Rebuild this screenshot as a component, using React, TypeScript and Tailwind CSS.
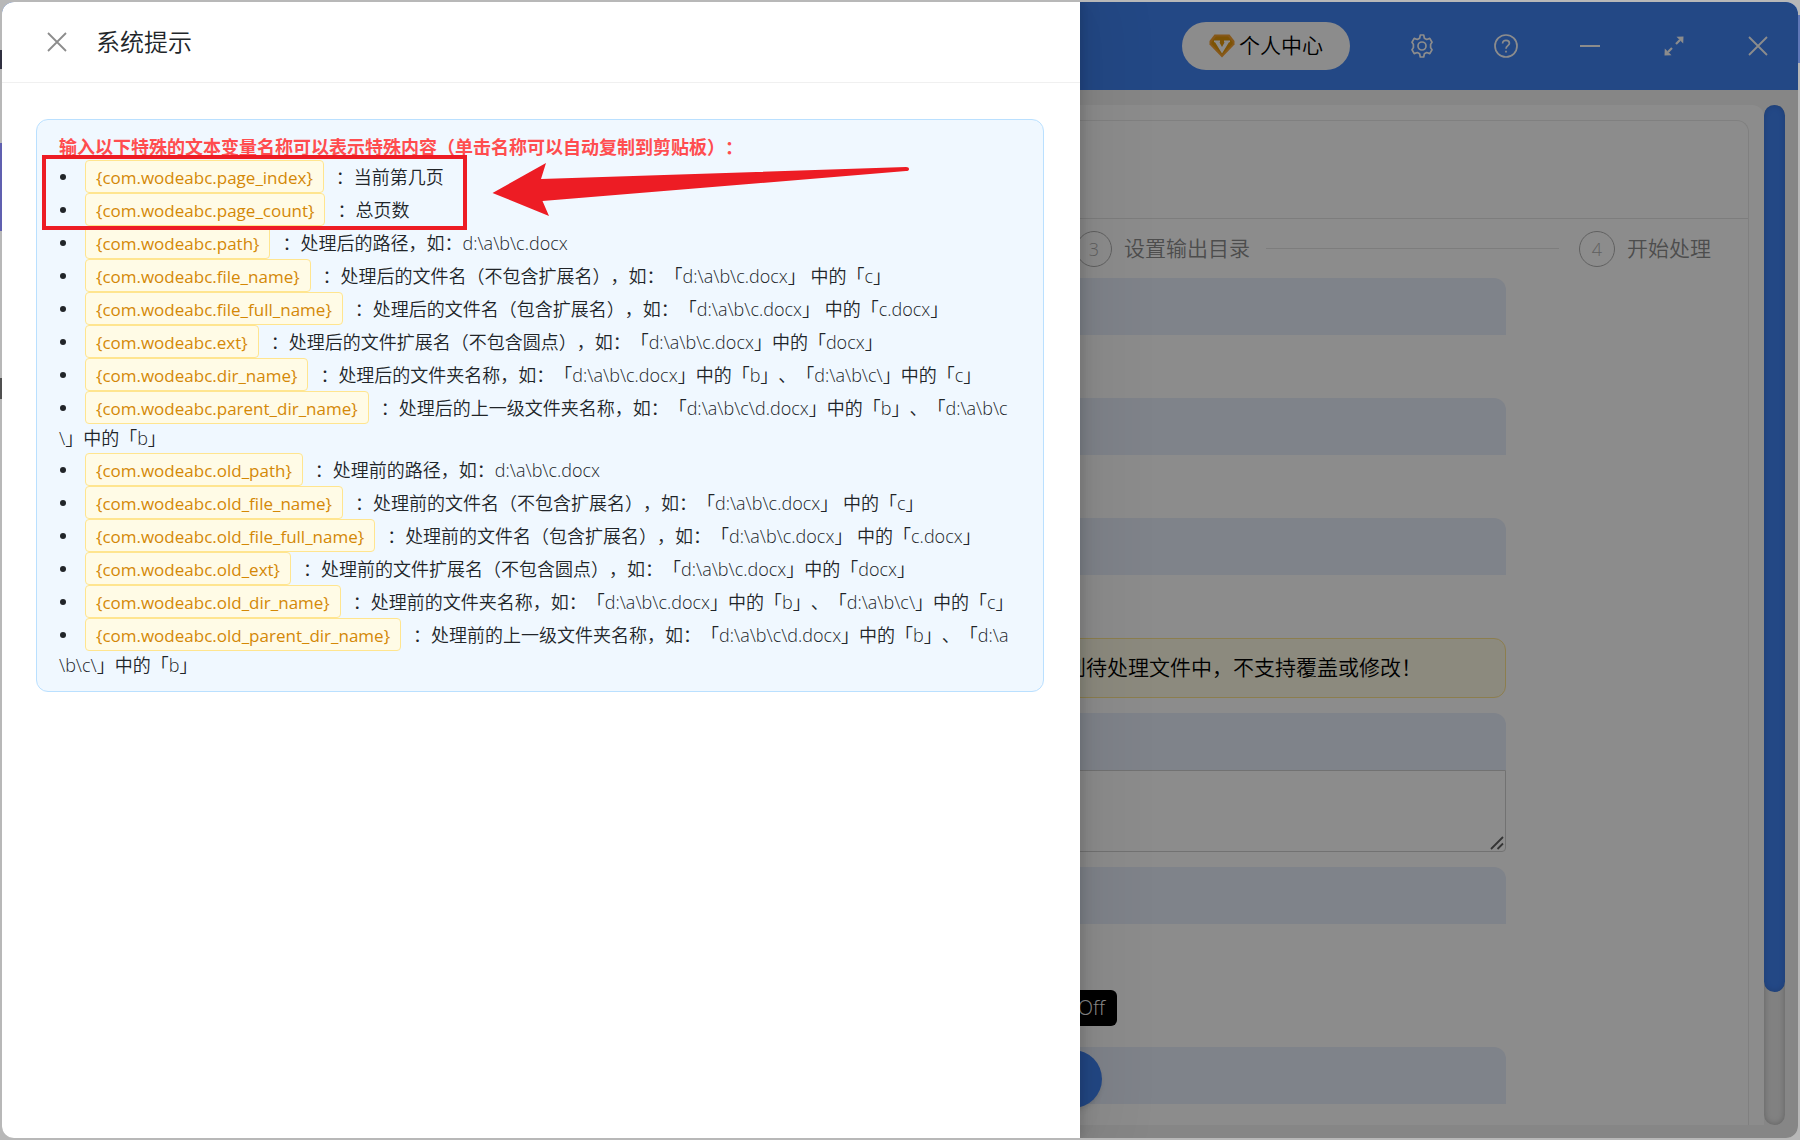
import { ReactNode } from "react";

const variables = [
  { name: "{com.wodeabc.page_index}", desc: "当前第几页" },
  { name: "{com.wodeabc.page_count}", desc: "总页数" },
  { name: "{com.wodeabc.path}", desc: "处理后的路径，如：d:\\a\\b\\c.docx" },
  {
    name: "{com.wodeabc.file_name}",
    desc: "处理后的文件名（不包含扩展名），如：「d:\\a\\b\\c.docx」 中的「c」",
  },
  {
    name: "{com.wodeabc.file_full_name}",
    desc: "处理后的文件名（包含扩展名），如：「d:\\a\\b\\c.docx」 中的「c.docx」",
  },
  {
    name: "{com.wodeabc.ext}",
    desc: "处理后的文件扩展名（不包含圆点），如：「d:\\a\\b\\c.docx」中的「docx」",
  },
  {
    name: "{com.wodeabc.dir_name}",
    desc: "处理后的文件夹名称，如：「d:\\a\\b\\c.docx」中的「b」、「d:\\a\\b\\c\\」中的「c」",
  },
  {
    name: "{com.wodeabc.parent_dir_name}",
    desc: "处理后的上一级文件夹名称，如：「d:\\a\\b\\c\\d.docx」中的「b」、「d:\\a\\b\\c",
    rest: "\\」中的「b」",
  },
  { name: "{com.wodeabc.old_path}", desc: "处理前的路径，如：d:\\a\\b\\c.docx" },
  {
    name: "{com.wodeabc.old_file_name}",
    desc: "处理前的文件名（不包含扩展名），如：「d:\\a\\b\\c.docx」 中的「c」",
  },
  {
    name: "{com.wodeabc.old_file_full_name}",
    desc: "处理前的文件名（包含扩展名），如：「d:\\a\\b\\c.docx」 中的「c.docx」",
  },
  {
    name: "{com.wodeabc.old_ext}",
    desc: "处理前的文件扩展名（不包含圆点），如：「d:\\a\\b\\c.docx」中的「docx」",
  },
  {
    name: "{com.wodeabc.old_dir_name}",
    desc: "处理前的文件夹名称，如：「d:\\a\\b\\c.docx」中的「b」、「d:\\a\\b\\c\\」中的「c」",
  },
  {
    name: "{com.wodeabc.old_parent_dir_name}",
    desc: "处理前的上一级文件夹名称，如：「d:\\a\\b\\c\\d.docx」中的「b」、「d:\\a",
    rest: "\\b\\c\\」中的「b」",
  },
];

const CloseIcon = ({ size }: { size: number }) => (
  <svg width={size} height={size} viewBox="0 0 20 20" fill="none" stroke="currentColor" strokeWidth="1.8">
    <path d="M1 1L19 19M19 1L1 19" />
  </svg>
);

const VipIcon = () => (
  <svg width="26" height="24" viewBox="0 0 26 24">
    <path d="M5.5 0.5H20.5L25.5 7V10.5L13 23.5L0.5 10.5V7Z" fill="#f5a030" />
    <path d="M7 2.5H19L23.5 8V10L13 20.5L2.5 10V8Z" fill="#e3980a" />
    <path d="M5 6.5H11V8L10.5 8.5L13 13L15.5 8.5L15 8V6.5H21V8L19.8 8.5L13 19.5L6.2 8.5L5 8Z" fill="#ffffff" />
  </svg>
);

const GearIcon = () => (
  <svg width="24" height="24" viewBox="0 0 24 24" fill="none" stroke="currentColor" strokeWidth="1.7" strokeLinejoin="round">
    <path d="M10.3 1H13.7L14.4 4.2L16.7 5.5L19.8 4.4L22 8.2L20.6 10.4V13.6L22 15.8L19.8 19.6L16.7 18.5L14.4 19.8L13.7 23H10.3L9.6 19.8L7.3 18.5L4.2 19.6L2 15.8L3.4 13.6V10.4L2 8.2L4.2 4.4L7.3 5.5L9.6 4.2Z" />
    <circle cx="12" cy="12" r="4" />
  </svg>
);

const HelpIcon = () => (
  <svg width="24" height="24" viewBox="0 0 24 24" fill="none" stroke="currentColor" strokeWidth="1.7">
    <circle cx="12" cy="12" r="11" />
    <path d="M8.6 9.4C8.6 7.4 10 6.3 12 6.3C14 6.3 15.4 7.5 15.4 9.2C15.4 11.6 12 11.7 12 14.8" />
    <path d="M12 16.8V18.6" />
  </svg>
);

const ExpandIcon = () => (
  <svg width="20" height="20" viewBox="0 0 20 20" fill="currentColor">
    <path d="M12 8L16 4M8 12L4 16" stroke="currentColor" strokeWidth="2.2" />
    <path d="M12.5 0.8L19.5 0.5L19.2 7.5ZM0.8 12.5L0.5 19.5L7.5 19.2Z" />
  </svg>
);

const IconButton = ({ label, children }: { label: string; children: ReactNode }) => (
  <button aria-label={label} className="flex h-9 w-9 items-center justify-center text-white">
    {children}
  </button>
);

const Step = ({ num, title }: { num: number; title: string }) => (
  <div className="flex shrink-0 items-center gap-3 text-[21px] text-[#8c8c8c]">
    <span className="flex h-9 w-9 items-center justify-center rounded-full border border-[#b0b0b0] text-lg text-[#b0b0b0]">
      {num}
    </span>
    <span>{title}</span>
  </div>
);

const SectionBar = () => <div className="h-[57px] rounded-t-xl bg-[#e8effc]" />;

const MainPage = () => (
  <div className="flex flex-1 flex-col bg-[#f5f5f5]">
    <header className="flex h-[88px] items-center justify-end bg-[#4083f3] pr-[22px]">
      <button className="mr-[54px] flex h-12 items-center gap-1 rounded-full bg-white px-[27px] text-[21px] text-black">
        <VipIcon />
        个人中心
      </button>
      <div className="flex gap-12">
        <IconButton label="设置">
          <GearIcon />
        </IconButton>
        <IconButton label="帮助">
          <HelpIcon />
        </IconButton>
        <IconButton label="最小化">
          <span className="h-0.5 w-5 bg-white" />
        </IconButton>
        <IconButton label="最大化">
          <ExpandIcon />
        </IconButton>
        <IconButton label="关闭">
          <CloseIcon size={20} />
        </IconButton>
      </div>
    </header>

    <div className="flex flex-1 pt-[15px] pr-[13px] pb-[13px]">
      <div className="flex flex-1 flex-col rounded-tr-xl bg-white pt-[15px] pr-[15px]">
        <div className="flex-1 rounded-tr-xl border-t border-r border-[#eaeaea]">
          <div className="h-[98px] border-b border-[#e4e4e4]" />
          <div className="flex h-[59px] items-center justify-end pr-[37px]">
            <Step num={3} title="设置输出目录" />
            <div className="mr-5 ml-4 h-px w-[293px] bg-[#e4e4e4]" />
            <Step num={4} title="开始处理" />
          </div>
          <div className="flex flex-col pr-[242px]">
            <SectionBar />
            <div className="h-[63px]" />
            <SectionBar />
            <div className="h-[63px]" />
            <SectionBar />
            <div className="h-[63px]" />
            <div className="mb-[15px] flex h-[60px] items-center justify-end rounded-xl border border-[#ffe58f] bg-[#fffbe6] pr-[83px] text-[21px] text-black">
              到待处理文件中，不支持覆盖或修改！
            </div>
            <SectionBar />
            <div className="relative mb-[15px]">
              <textarea
                aria-label="文本内容"
                className="block h-[82px] w-full resize-none rounded-b border border-[#d0d0d0] bg-white"
              />
              <svg
                className="absolute right-0.5 bottom-0.5"
                width="14"
                height="14"
                viewBox="0 0 14 14"
                stroke="#606060"
                strokeWidth="1.8"
              >
                <path d="M1 13L13 1M7.5 13L13 7.5" />
              </svg>
            </div>
            <SectionBar />
            <div className="flex h-[123px] items-center pt-[45px] pl-[1035px]">
              <button className="h-9 w-20 rounded-md bg-black pr-3 text-right text-xl text-white">Off</button>
            </div>
            <SectionBar />
          </div>
        </div>
      </div>
      <div className="w-[21px] rounded-full bg-[#ebebeb] shadow-[inset_0_0_6px_rgba(0,0,0,0.25)]">
        <div className="h-[87%] rounded-full bg-[#4083f3] shadow-[inset_0_0_6px_rgba(0,0,0,0.15)]" />
      </div>
    </div>
  </div>
);

const HintDrawer = () => (
  <aside className="absolute inset-y-0 left-0 w-3/5 bg-white text-[#212529] shadow-[6px_0_16px_rgba(0,0,0,0.08),3px_0_6px_rgba(0,0,0,0.06),9px_0_60px_16px_rgba(0,0,0,0.06)]">
    <div className="flex h-[81px] items-center gap-[29px] border-b border-[#f0f0f0] pl-[45px]">
      <button aria-label="关闭" className="text-[#8c8c8c]">
        <CloseIcon size={20} />
      </button>
      <h1 className="text-2xl">系统提示</h1>
    </div>
    <div className="mt-9 mr-9 ml-[34px] rounded-xl border border-[#bae0ff] bg-[#f0f8ff] px-[22px] pt-3 pb-[11px] text-lg leading-[29px]">
      <p className="h-7 font-['Noto_Sans_CJK_SC',sans-serif] font-bold text-[#ff4d4f]">
        输入以下特殊的文本变量名称可以表示特殊内容（单击名称可以自动复制到剪贴板）：
      </p>
      <ul>
        {variables.map((item) => (
          <li key={item.name} className="whitespace-nowrap">
            <div className="flex h-[33px] items-center">
              <span className="w-[26px] shrink-0">
                <span className="ml-px block h-1.5 w-1.5 rounded-full bg-[#212529]" />
              </span>
              <button className="mr-3 h-[33px] shrink-0 rounded-sm border border-[#ffe58f] bg-[#fffbe6] px-2.5 pt-0.5 font-['Open_Sans',sans-serif] text-[17px] text-[#d48806]">
                {item.name}
              </button>
              <span className="pt-0.5 whitespace-pre">：{item.desc}</span>
            </div>
            {item.rest && <div className="h-[29px]">{item.rest}</div>}
          </li>
        ))}
      </ul>
    </div>

    {/* red marker over the first two variables */}
    <div className="absolute top-[153px] left-10 h-[75px] w-[425px] border-4 border-[#ed1c24]" />
    <svg className="absolute top-[160px] left-[490px]" width="420" height="56" viewBox="492 162 420 56">
      <path d="M492.5 193L546 163L541 179L906 167Q909 167 909 169Q909 171 906 171L542.5 201L549 216Z" fill="#ed1c24" />
    </svg>
  </aside>
);

const App = () => {
  return (
    <div
      lang="zh-CN"
      className="flex min-h-screen bg-[#b8b8b8] bg-[linear-gradient(to_bottom,transparent_50px,#303040_50px,#303040_69px,transparent_69px,transparent_143px,#6060b0_143px,#6060b0_231px,transparent_231px,transparent_378px,#505050_378px,#505050_399px,transparent_399px),linear-gradient(to_bottom,transparent_15px,#6078b8_15px,#6078b8_63px,transparent_63px)] bg-[length:2px_100%] bg-[position:left_top,right_top] bg-no-repeat p-0.5 font-['Open_Sans_Light','Noto_Sans_CJK_SC_DemiLight','Noto_Sans_CJK_SC',sans-serif] [text-spacing-trim:space-all]"
    >
      <div className="relative flex flex-1 overflow-hidden rounded-xl">
        <MainPage />
        {/* floating round button */}
        <button
          aria-label="下一步"
          className="absolute bottom-[30px] left-[1042px] h-[58px] w-[58px] rounded-full bg-[#4083f3] shadow-md"
        />
        <div className="absolute inset-0 bg-black/45" />
        <HintDrawer />
      </div>
    </div>
  );
};

export default App;
